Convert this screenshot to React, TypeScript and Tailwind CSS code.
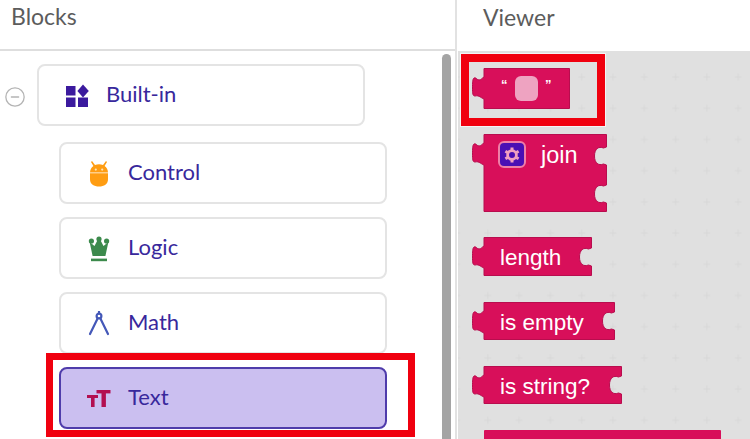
import React from 'react';
import { CircleMinus } from 'lucide-react';

const BLOCK = '#d80f5a';
const BLOCK_EDGE = '#b80d4e';

// puzzle outline: left tab plus a socket on the right side for each entry of sockets
const blockPath = (w: number, h: number, sockets: number[]) => {
  let d = 'M12 0.5 H' + (w - 0.5);
  for (const a of sockets) {
    const r = w - 0.5;
    d += ` V${a} L${r - 3} ${a + 1} C${r - 8} ${a - 1} ${r - 12} ${a + 2} ${r - 12} ${a + 9} C${r - 12} ${a + 16} ${r - 8} ${a + 19} ${r - 3} ${a + 17} L${r} ${a + 18}`;
  }
  d += ` V${h - 0.5} H12 V31 C9 30 7 27 3 28 C0.5 28 0.5 25 0.5 20 C0.5 15 0.5 11 2 10 C4 9 5 12 7 12 C9 12 10 10 12 9 Z`;
  return d;
};

interface BlockProps {
  width: number;
  height: number;
  sockets?: number[];
  className: string;
  children?: React.ReactNode;
}

const Block: React.FC<BlockProps> = ({ width, height, sockets = [], className, children }) => (
  <div className={`absolute ${className}`}>
    <svg width={width} height={height} className="absolute left-0 top-0 block">
      <path d={blockPath(width, height, sockets)} fill={BLOCK} stroke={BLOCK_EDGE} strokeWidth="1" />
    </svg>
    <div className="relative flex h-full items-center pl-[28px] pt-[4px] font-['Liberation_Sans',Arial,sans-serif] text-[22.5px] leading-none text-white">
      {children}
    </div>
  </div>
);

const BuiltinIcon = () => (
  <svg width="24" height="24" viewBox="0 0 24 24" fill="#3b1a9e">
    <rect x="1" y="2" width="9.5" height="9.5" />
    <path d="M18 0.5 L23.8 7 L18 13.5 L12.4 7 Z" />
    <rect x="1" y="13.5" width="9.5" height="9.5" />
    <rect x="13" y="13.5" width="10" height="9.5" />
  </svg>
);

const ControlIcon = () => (
  <svg width="20" height="28" viewBox="0 0 20 28" fill="#ff9d12">
    <path d="M3 1 L6 5 Q10 3.5 14 5 L17 1 L18 2 L15.6 6 Q18.8 8.4 19 12.4 H1 Q1.2 8.4 4.4 6 L2 2 Z" />
    <path d="M1 13.2 H19 V19 C19 24.5 15 26.5 10 26.5 C5 26.5 1 24.5 1 19 Z" />
    <circle cx="6.8" cy="9.6" r="1.1" fill="#ffe3b8" />
    <circle cx="13.2" cy="9.6" r="1.1" fill="#ffe3b8" />
  </svg>
);

const LogicIcon = () => (
  <svg width="22" height="26" viewBox="0 0 22 26" fill="#3c8a4c">
    <circle cx="3.4" cy="5" r="2.6" />
    <circle cx="11" cy="3" r="2.6" />
    <circle cx="18.6" cy="5" r="2.6" />
    <path d="M1.6 6 L6.5 10 L9.6 4 H12.4 L15.5 10 L20.4 6 L17.4 20 H4.6 Z" />
    <rect x="3" y="22.6" width="16" height="2.6" />
  </svg>
);

const MathIcon = () => (
  <svg width="22" height="26" viewBox="0 0 22 26" fill="none" stroke="#4458b8" strokeWidth="2.2" strokeLinecap="round">
    <circle cx="11" cy="5" r="2.4" />
    <path d="M11 0.8 V2.4" />
    <path d="M9.6 7.4 L2 23" />
    <path d="M12.4 7.4 L20 23" />
  </svg>
);

const TextIcon = () => (
  <svg width="24" height="20" viewBox="0 0 24 20" fill="#b30f50">
    <rect x="0" y="6" width="11" height="3" />
    <rect x="4" y="6" width="3.6" height="12" />
    <rect x="9.5" y="1" width="14" height="3.4" />
    <rect x="14.5" y="1" width="4.4" height="17" />
  </svg>
);

const GearIcon = () => (
  <svg width="18" height="18" viewBox="0 0 18 18" fill="none" stroke="#f2a0c0">
    <circle cx="9" cy="9" r="4.4" strokeWidth="2.8" />
    <path d="M9 1.4 V4 M9 14 V16.6 M2.4 5.2 L4.7 6.5 M13.3 11.5 L15.6 12.8 M2.4 12.8 L4.7 11.5 M13.3 6.5 L15.6 5.2" strokeWidth="3" />
  </svg>
);

interface NodeProps {
  label: string;
  icon: React.ReactNode;
  selected?: boolean;
  className?: string;
}

const TreeNode: React.FC<NodeProps> = ({ label, icon, selected, className = '' }) => (
  <div
    className={`flex h-[62px] w-[328px] items-center rounded-lg border-2 ${
      selected ? 'border-[#4f3cab] bg-[#cbbff0]' : 'border-[#e4e4e4] bg-white'
    } ${className}`}
  >
    <div className="flex w-[67px] shrink-0 justify-center pl-[8px] pt-[1px]">{icon}</div>
    <span className="pb-[3px] font-['Lato',sans-serif] text-[22px] leading-none text-[#38289c]">{label}</span>
  </div>
);

const Dots = () => (
  <svg className="absolute inset-0 h-full w-full">
    <defs>
      <pattern id="dots" x="14.3" y="10.5" width="31.3" height="31.2" patternUnits="userSpaceOnUse">
        <path d="M12 15.5 H19 M15.5 12 V19" stroke="#d8d8d8" strokeWidth="1" fill="none" />
      </pattern>
    </defs>
    <rect width="100%" height="100%" fill="url(#dots)" />
  </svg>
);

const App: React.FC = () => {
  return (
    <div className="relative flex h-[439px] w-[750px] overflow-hidden bg-white">
      <div className="w-[457px] shrink-0 border-r-2 border-[#e2e2e2]">
        <div className="flex h-[51px] items-start border-b-2 border-[#dedede] pl-[11px] pt-[3px] font-['Lato',sans-serif] text-[23px] leading-[26px] text-[#5c5c5c]">
          Blocks
        </div>
        <div className="flex flex-col pt-[13px]">
          <div className="flex items-center">
            <CircleMinus size={22} strokeWidth={1.4} color="#b4b4b4" className="ml-[4px] mr-[11px] mt-[3px]" />
            <TreeNode label="Built-in" icon={<BuiltinIcon />} />
          </div>
          <div className="ml-[59px] mt-[16px] flex flex-col gap-[13px]">
            <TreeNode label="Control" icon={<ControlIcon />} />
            <TreeNode label="Logic" icon={<LogicIcon />} />
            <TreeNode label="Math" icon={<MathIcon />} />
            <TreeNode label="Text" icon={<TextIcon />} selected />
          </div>
        </div>
      </div>

      <div className="flex min-w-0 flex-1 flex-col">
        <div className="h-[51px] pl-[26px] pt-[4px] font-['Lato',sans-serif] text-[23px] leading-[26px] text-[#5c5c5c]">
          Viewer
        </div>
        <div className="relative ml-[1px] flex-1 bg-[#e0e0e0]">
          <Dots />
          <Block width={98} height={41} className="left-[14px] top-[17px] h-[41px] w-[98px]">
            <span className="absolute left-[29px] top-[10px] text-[13px] font-bold">“</span>
            <span className="absolute left-[43px] top-[8px] h-[25px] w-[23px] rounded-md bg-[#eea3c1]" />
            <span className="absolute left-[73px] top-[10px] text-[13px] font-bold">”</span>
          </Block>
          <Block width={135} height={78} sockets={[13, 51]} className="left-[14px] top-[83px] h-[78px] w-[135px]">
            <span className="absolute left-[26px] top-[7px] flex h-[27px] w-[28px] items-center justify-center rounded-md border-2 border-[#ee7fa8] bg-[#4a0fb4]">
              <GearIcon />
            </span>
            <span className="absolute left-[69px] top-[10px] text-[23.5px]">join</span>
          </Block>
          <Block width={120} height={39} sockets={[11]} className="left-[14px] top-[186px] h-[39px] w-[120px]">
            length
          </Block>
          <Block width={143} height={38} sockets={[10]} className="left-[14px] top-[251px] h-[38px] w-[143px]">
            is empty
          </Block>
          <Block width={150} height={38} sockets={[10]} className="left-[14px] top-[315px] h-[38px] w-[150px]">
            is string?
          </Block>
          <div className="absolute left-[26px] top-[379px] h-[20px] w-[237px] rounded-t-[1px] bg-[#d80f5a]" />
        </div>
      </div>

      <div className="absolute left-[442px] top-[54px] h-[400px] w-[9px] rounded-full bg-[#a4a4a4]" />
      <div className="absolute left-[461px] top-[54px] h-[72px] w-[144px] border-8 border-[#f0000f] shadow-[0_0_0_1px_#f4f4f4]" />
      <div className="absolute left-[46px] top-[353px] h-[84px] w-[369px] border-[7px] border-[#f0000f]" />
    </div>
  );
};

export default App;
